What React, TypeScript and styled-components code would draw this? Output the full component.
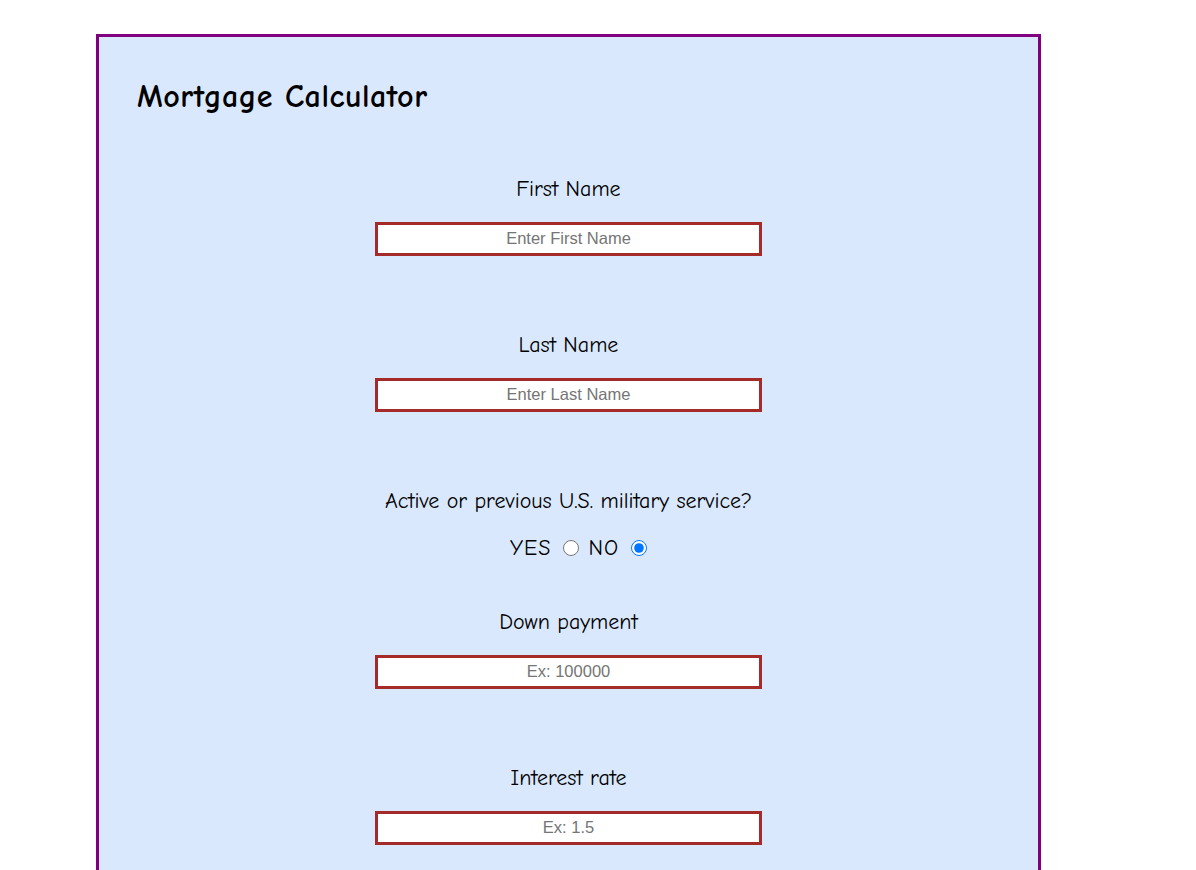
import React from "react";
import styled, { createGlobalStyle } from "styled-components";

const Global = createGlobalStyle`
  html, body { margin: 0; padding: 0; background: #ffffff; }
  body { font-family: "Comic Sans MS", "Comic Neue", "Open Sans", sans-serif; color: #000; }
`;

const Card = styled.main`
  box-sizing: border-box;
  width: 945px;
  margin: 34px 0 40px 96px;
  border: 3px solid #800080;
  background: #d9e8fc;
  padding: 40px 38px 60px 38px;
`;

const Title = styled.h1`
  margin: 0;
  font-size: 32px;
  line-height: 40px;
  font-weight: 700;
  letter-spacing: 0.5px;
`;

const Form = styled.form`
  display: flex;
  flex-direction: column;
  align-items: center;
  margin-top: 58px;
`;

const Field = styled.div<{ $after?: number }>`
  display: flex;
  flex-direction: column;
  align-items: center;
  gap: 19px;
  margin-bottom: ${(p) => p.$after ?? 75}px;
`;

const Label = styled.label`
  font-size: 22px;
  line-height: 28px;
`;

const TextInput = styled.input`
  box-sizing: border-box;
  width: 387px;
  height: 34px;
  border: 3px solid #a52a2a;
  background: #fff;
  text-align: center;
  font-family: "Liberation Sans", Arial, sans-serif;
  font-size: 16.5px;
  padding: 0 4px 1px;
  outline: none;
  &::placeholder { color: #757575; }
`;

const RadioRow = styled.div`
  display: flex;
  align-items: center;
  font-size: 22px;
  line-height: 28px;
  letter-spacing: 1px;
  padding-left: 20px;
`;

const Radio = styled.input<{ $last?: boolean }>`
  width: 16px;
  height: 16px;
  margin: 0 ${(p) => (p.$last ? 0 : 9)}px 0 12px;
  accent-color: #0075ff;
`;

export default function App() {
  return (
    <>
      <Global />
      <Card>
        <Title>Mortgage Calculator</Title>
        <Form onSubmit={(e) => e.preventDefault()}>
          <Field>
            <Label htmlFor="fn">First Name</Label>
            <TextInput id="fn" placeholder="Enter First Name" />
          </Field>
          <Field>
            <Label htmlFor="ln">Last Name</Label>
            <TextInput id="ln" placeholder="Enter Last Name" />
          </Field>
          <Field $after={46}>
            <Label>Active or previous U.S. military service?</Label>
            <RadioRow>
              <span>YES</span>
              <Radio type="radio" name="mil" value="yes" />
              <span>NO</span>
              <Radio type="radio" name="mil" value="no" defaultChecked $last />
            </RadioRow>
          </Field>
          <Field>
            <Label htmlFor="dp">Down payment</Label>
            <TextInput id="dp" placeholder="Ex: 100000" />
          </Field>
          <Field>
            <Label htmlFor="ir">Interest rate</Label>
            <TextInput id="ir" placeholder="Ex: 1.5" />
          </Field>
        </Form>
      </Card>
    </>
  );
}
